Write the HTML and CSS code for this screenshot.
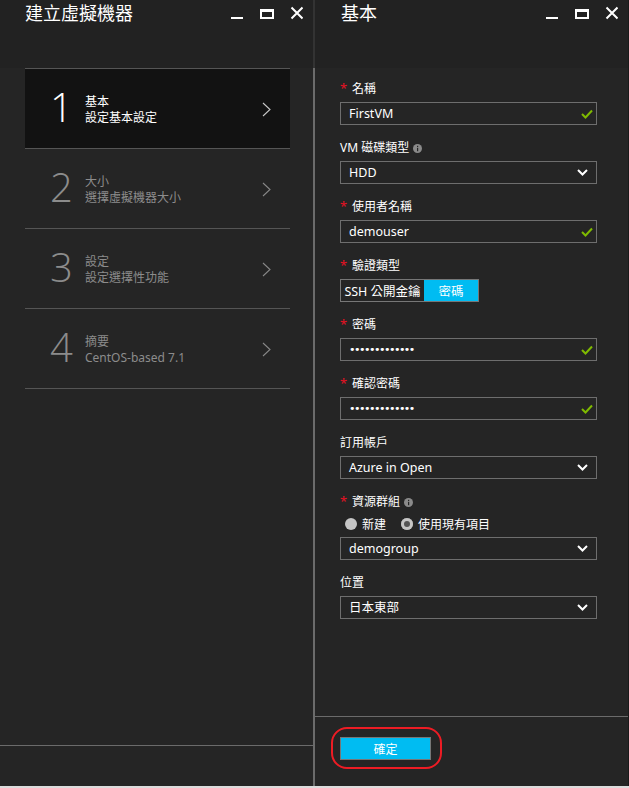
FILE: index.html
```html
<!DOCTYPE html>
<html lang="zh-Hant">
<head>
<meta charset="utf-8">
<title>建立虛擬機器</title>
<link rel="stylesheet" href="styles.css">
</head>
<body>
<div class="frame">
  <section class="blade blade-left">
    <header class="blade-header">
      <h1 class="blade-title">建立虛擬機器</h1>
      <svg class="win-controls" width="72" height="24" viewBox="0 0 72 24" aria-hidden="true">
        <rect x="0" y="17" width="12" height="2" fill="#fff"/>
        <rect x="29" y="9" width="14" height="3" fill="#fff"/>
        <rect x="30" y="11" width="12" height="7" fill="none" stroke="#fff" stroke-width="2"/>
        <path d="M60.5 7.5 L71.5 18.5 M71.5 7.5 L60.5 18.5" stroke="#fff" stroke-width="2" fill="none"/>
      </svg>
    </header>
    <ol class="steps">
      <li class="step step-active">
        <span class="step-num">1</span>
        <span class="step-text"><span>基本</span><span>設定基本設定</span></span>
        <svg class="step-chev" width="9" height="15" viewBox="0 0 9 15"><polyline points="1,1 8,7.5 1,14" fill="none" stroke="#c8c8c8" stroke-width="1.1"/></svg>
      </li>
      <li class="step">
        <span class="step-num">2</span>
        <span class="step-text"><span>大小</span><span>選擇虛擬機器大小</span></span>
        <svg class="step-chev" width="9" height="15" viewBox="0 0 9 15"><polyline points="1,1 8,7.5 1,14" fill="none" stroke="#888" stroke-width="1.1"/></svg>
      </li>
      <li class="step">
        <span class="step-num">3</span>
        <span class="step-text"><span>設定</span><span>設定選擇性功能</span></span>
        <svg class="step-chev" width="9" height="15" viewBox="0 0 9 15"><polyline points="1,1 8,7.5 1,14" fill="none" stroke="#888" stroke-width="1.1"/></svg>
      </li>
      <li class="step">
        <span class="step-num">4</span>
        <span class="step-text"><span>摘要</span><span>CentOS-based 7.1</span></span>
        <svg class="step-chev" width="9" height="15" viewBox="0 0 9 15"><polyline points="1,1 8,7.5 1,14" fill="none" stroke="#888" stroke-width="1.1"/></svg>
      </li>
    </ol>
    <div class="blade-spacer"></div>
    <footer class="blade-footer blade-footer-left"></footer>
  </section>

  <div class="divider"><span class="divider-top"></span><span class="divider-rest"></span></div>

  <section class="blade blade-right">
    <header class="blade-header">
      <h1 class="blade-title">基本</h1>
      <svg class="win-controls" width="72" height="24" viewBox="0 0 72 24" aria-hidden="true">
        <rect x="0" y="17" width="12" height="2" fill="#fff"/>
        <rect x="29" y="9" width="14" height="3" fill="#fff"/>
        <rect x="30" y="11" width="12" height="7" fill="none" stroke="#fff" stroke-width="2"/>
        <path d="M60.5 7.5 L71.5 18.5 M71.5 7.5 L60.5 18.5" stroke="#fff" stroke-width="2" fill="none"/>
      </svg>
    </header>

    <div class="form">
      <div class="field">
        <div class="label"><span class="req">*</span>名稱</div>
        <div class="input"><span class="val">FirstVM</span>
          <svg class="check" width="12" height="10" viewBox="0 0 12 10"><polyline points="1,5 4.5,8.5 11,1.5" fill="none" stroke="#7fba00" stroke-width="2"/></svg>
        </div>
      </div>
      <div class="field">
        <div class="label">VM 磁碟類型<svg class="info" width="9" height="9" viewBox="0 0 9 9"><circle cx="4.5" cy="4.5" r="4.5" fill="#8a8a8a"/><rect x="4" y="3.8" width="1.2" height="3.4" fill="#252525"/><rect x="4" y="1.8" width="1.2" height="1.2" fill="#252525"/></svg></div>
        <div class="input select"><span class="val">HDD</span>
          <svg class="chev" width="11" height="7" viewBox="0 0 11 7"><polyline points="1,1 5.5,5.5 10,1" fill="none" stroke="#fff" stroke-width="2"/></svg>
        </div>
      </div>
      <div class="field">
        <div class="label"><span class="req">*</span>使用者名稱</div>
        <div class="input"><span class="val">demouser</span>
          <svg class="check" width="12" height="10" viewBox="0 0 12 10"><polyline points="1,5 4.5,8.5 11,1.5" fill="none" stroke="#7fba00" stroke-width="2"/></svg>
        </div>
      </div>
      <div class="field">
        <div class="label"><span class="req">*</span>驗證類型</div>
        <div class="toggle">
          <span class="seg">SSH 公開金鑰</span>
          <span class="seg seg-on">密碼</span>
        </div>
      </div>
      <div class="field">
        <div class="label"><span class="req">*</span>密碼</div>
        <div class="input"><span class="val dots">•••••••••••••</span>
          <svg class="check" width="12" height="10" viewBox="0 0 12 10"><polyline points="1,5 4.5,8.5 11,1.5" fill="none" stroke="#7fba00" stroke-width="2"/></svg>
        </div>
      </div>
      <div class="field">
        <div class="label"><span class="req">*</span>確認密碼</div>
        <div class="input"><span class="val dots">•••••••••••••</span>
          <svg class="check" width="12" height="10" viewBox="0 0 12 10"><polyline points="1,5 4.5,8.5 11,1.5" fill="none" stroke="#7fba00" stroke-width="2"/></svg>
        </div>
      </div>
      <div class="field">
        <div class="label">訂用帳戶</div>
        <div class="input select"><span class="val">Azure in Open</span>
          <svg class="chev" width="11" height="7" viewBox="0 0 11 7"><polyline points="1,1 5.5,5.5 10,1" fill="none" stroke="#fff" stroke-width="2"/></svg>
        </div>
      </div>
      <div class="field">
        <div class="label"><span class="req">*</span>資源群組<svg class="info" width="9" height="9" viewBox="0 0 9 9"><circle cx="4.5" cy="4.5" r="4.5" fill="#8a8a8a"/><rect x="4" y="3.8" width="1.2" height="3.4" fill="#252525"/><rect x="4" y="1.8" width="1.2" height="1.2" fill="#252525"/></svg></div>
        <div class="radios">
          <span class="radio"><span class="radio-dot"></span>新建</span>
          <span class="radio"><span class="radio-dot radio-on"></span>使用現有項目</span>
        </div>
        <div class="input select"><span class="val">demogroup</span>
          <svg class="chev" width="11" height="7" viewBox="0 0 11 7"><polyline points="1,1 5.5,5.5 10,1" fill="none" stroke="#fff" stroke-width="2"/></svg>
        </div>
      </div>
      <div class="field">
        <div class="label">位置</div>
        <div class="input select"><span class="val">日本東部</span>
          <svg class="chev" width="11" height="7" viewBox="0 0 11 7"><polyline points="1,1 5.5,5.5 10,1" fill="none" stroke="#fff" stroke-width="2"/></svg>
        </div>
      </div>
    </div>

    <footer class="blade-footer blade-footer-right">
      <button class="btn-ok" type="button">確定</button>
      <span class="highlight" aria-hidden="true"></span>
    </footer>
  </section>
</div>
</body>
</html>
```

FILE: styles.css
```css
* { box-sizing: border-box; }

html, body {
  margin: 0;
  padding: 0;
  background: #252525;
}

body {
  font-family: "Segoe UI", "Noto Sans", "Noto Sans CJK TC", sans-serif;
  font-size: 12px;
  color: #fff;
}

.frame {
  display: flex;
  width: 629px;
  height: 788px;
  border-bottom: 2px solid #dcdcdc;
}

.blade {
  display: flex;
  flex-direction: column;
  height: 100%;
}

.blade-left { width: 313px; }

.blade-right {
  flex: 1;
  border-right: 1px solid #1a1a1a;
}

.divider {
  width: 2px;
  display: flex;
  flex-direction: column;
}
.divider-top { height: 68px; background: #333; }
.divider-rest { flex: 1; background: #6b6b6b; }

.blade-header {
  height: 68px;
  background: #222;
  display: flex;
  justify-content: space-between;
  align-items: flex-start;
  padding: 0 10px 0 25px;
}
.blade-right .blade-header { padding-left: 26px; }

.blade-title {
  margin: 0;
  font-family: "Noto Sans CJK TC", sans-serif;
  font-weight: 400;
  font-size: 18px;
  line-height: 24px;
  color: #fff;
}

.win-controls { display: block; }

/* steps */
.steps {
  list-style: none;
  margin: 0 23px 0 25px;
  padding: 0;
  border-top: 1px solid #555;
}

.step {
  height: 80px;
  border-bottom: 1px solid #555;
  display: flex;
  align-items: center;
  padding: 0 19px 0 25px;
  color: #8c8c8c;
}

.step-active {
  background: #121212;
  color: #fff;
}

.step-num {
  width: 35px;
  font-family: "Open Sans", "Segoe UI", sans-serif;
  font-weight: 350;
  font-size: 40px;
  line-height: 40px;
  margin-top: -4px;
}

.step-text {
  flex: 1;
  display: flex;
  flex-direction: column;
  line-height: 16px;
  margin-top: 3px;
}

.step-chev { display: block; margin-top: 2px; }

.blade-spacer { flex: 1; }

.blade-footer-left {
  height: 41px;
  border-top: 1px solid #6b6b6b;
}

/* form */
.form {
  flex: 1;
  padding: 13px 31px 0 25px;
  display: flex;
  flex-direction: column;
}

.field { margin-bottom: 15px; }

.label {
  height: 16px;
  line-height: 16px;
  margin-bottom: 5px;
  display: flex;
  align-items: center;
  color: #fff;
}

.req {
  color: #e81123;
  width: 12px;
  align-self: flex-start;
  line-height: 14px;
  font-size: 13px;
}

.info { margin-left: 4px; }

.input {
  height: 23px;
  border: 1px solid #6e6e6e;
  display: flex;
  align-items: center;
  justify-content: space-between;
  padding: 0 3px 0 8px;
  font-size: 12.5px;
}
.input.select { padding-right: 8px; }

.val { line-height: 20px; }

.dots {
  font-family: "DejaVu Sans", sans-serif;
  font-size: 11px;
  letter-spacing: -1.5px;
}

.check { display: block; }
.chev { display: block; }

.toggle {
  display: flex;
  width: 139px;
  height: 23px;
  border: 1px solid #777;
}
.seg {
  display: flex;
  align-items: center;
  justify-content: center;
  width: 83px;
  font-size: 12.5px;
}
.seg-on {
  flex: 1;
  background: #00bcf2;
}

.radios {
  display: flex;
  align-items: center;
  height: 16px;
  margin: 6px 0 5px 5px;
  gap: 15px;
}
.radio {
  display: flex;
  align-items: center;
  gap: 5px;
}
.radio-dot {
  width: 12px;
  height: 12px;
  border-radius: 50%;
  background: #c6c6c6;
  display: inline-block;
}
.radio-on {
  background: #c6c6c6;
  box-shadow: inset 0 0 0 3px #c6c6c6, inset 0 0 0 6px #555;
}

.blade-footer-right {
  position: relative;
  height: 70px;
  border-top: 1px solid #6b6b6b;
  padding: 20px 0 0 25px;
}

.btn-ok {
  width: 91px;
  height: 23px;
  background: #00bcf2;
  border: 1px solid #777;
  color: #fff;
  font-family: "Noto Sans CJK TC", sans-serif;
  font-size: 12px;
  padding: 0;
}

.highlight {
  position: absolute;
  left: 16px;
  top: 10px;
  width: 111px;
  height: 42px;
  border: 2px solid #ed1c24;
  border-radius: 16px;
  pointer-events: none;
}
```
